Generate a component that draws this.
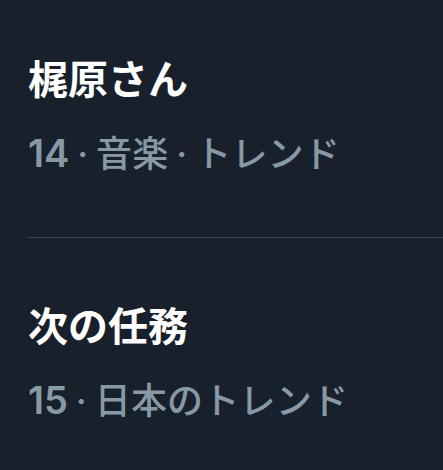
import React from 'react';

const trends = [
  { title: '梶原さん', rank: '14', meta: ['音楽', 'トレンド'] },
  { title: '次の任務', rank: '15', meta: ['日本のトレンド'] },
];

const font = "font-['Inter','Noto_Sans_CJK_JP',sans-serif]";

export default function App() {
  return (
    <div className={`w-[443px] h-[470px] overflow-hidden bg-[#17202b] pt-[56px] ${font}`}>
      {trends.map((t, i) => (
        <div key={t.title}>
          {i > 0 && <div className="ml-[27px] h-px bg-[#38444d] mt-[61px] mb-[65px]" />}
          <div className="px-[28px]">
            <p className="text-[40px] leading-[48px] font-bold text-white">{t.title}</p>
            <p className="mt-[27px] text-[36px] leading-[44px] font-medium tracking-[0.2px] [word-spacing:-2px] text-[#8899a6]">
              <span className="text-[38px] font-semibold tracking-normal">{t.rank}</span>
              {t.meta.map(m => ` · ${m}`).join('')}
            </p>
          </div>
        </div>
      ))}
    </div>
  );
}
